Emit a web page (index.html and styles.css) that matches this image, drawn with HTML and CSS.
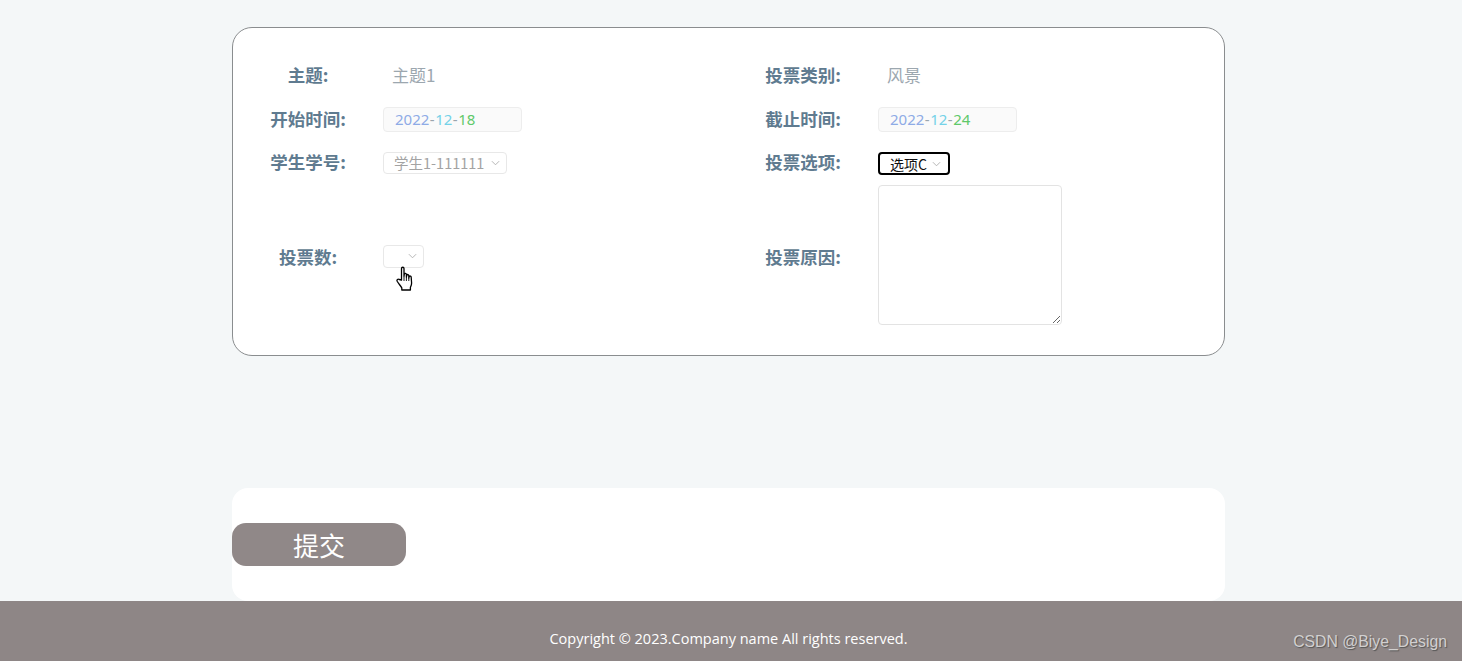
FILE: index.html
```html
<!DOCTYPE html>
<html lang="zh-CN">
<head>
<meta charset="utf-8">
<title>投票</title>
<link rel="stylesheet" href="styles.css">
</head>
<body>
<main class="page">
  <form class="card">
    <div class="field">
      <span class="label label-first">主题:</span>
      <span class="plain">主题1</span>
    </div>
    <div class="field">
      <span class="label label-first">投票类别:</span>
      <span class="plain">风景</span>
    </div>
    <div class="field">
      <span class="label">开始时间:</span>
      <div class="date"><span class="c-blue">2022</span><span class="c-dash">-</span><span class="c-cyan">12</span><span class="c-dash">-</span><span class="c-green">18</span></div>
    </div>
    <div class="field">
      <span class="label">截止时间:</span>
      <div class="date"><span class="c-blue">2022</span><span class="c-dash">-</span><span class="c-cyan">12</span><span class="c-dash">-</span><span class="c-green">24</span></div>
    </div>
    <div class="field">
      <span class="label">学生学号:</span>
      <div class="select select-student">学生1-111111<svg class="chev" viewBox="0 0 10 6"><path d="M1 1l4 4 4-4"/></svg></div>
    </div>
    <div class="field">
      <span class="label">投票选项:</span>
      <div class="select select-focus">选项C<svg class="chev" viewBox="0 0 10 6"><path d="M1 1l4 4 4-4"/></svg></div>
    </div>
    <div class="field field-low">
      <span class="label">投票数:</span>
      <div class="select select-empty"><svg class="chev" viewBox="0 0 10 6"><path d="M1 1l4 4 4-4"/></svg>
        <svg class="hand" viewBox="0 0 17 25"><path d="M5.5 14V2.6C5.500 0.800 8 0.800 8 2.600V10.500L8.300 8.200C8.600 6.900 10.300 7.100 10.400 8.500V11L10.800 9.300C11.200 8.100 12.700 8.300 12.800 9.700V12L13.200 10.600C13.700 9.600 15.200 9.900 15.200 11.200L15.600 17C15.600 19 15 20 14.400 21.400V24H5.800V21.800C4.300 19.400 2.500 17.600 1.200 15.300C.4 13.800 2 12.500 3.300 13.500Z"/><path class="hand-line" d="M8 11v4M10.400 11v4M12.800 12v3"/></svg>
      </div>
    </div>
    <div class="field">
      <span class="label label-low">投票原因:</span>
      <textarea class="reason"></textarea>
    </div>
  </form>
  <section class="actions">
    <button class="submit" type="button">提交</button>
  </section>
</main>
<footer class="footer">
  <p class="copy">Copyright © 2023.Company name All rights reserved.</p>
  <span class="mark">CSDN @Biye_Design</span>
</footer>
</body>
</html>
```

FILE: styles.css
```css
* { box-sizing: border-box; }
html, body { margin: 0; height: 100%; }
body {
  background: #f4f7f8;
  font-family: "Noto Sans CJK SC", "Liberation Sans", sans-serif;
  overflow: hidden;
}
.page { width: 1225px; padding: 27px 0 0 232px; }
.card {
  height: 329px;
  background: #fff;
  border: 1px solid #8a8d8f;
  border-radius: 20px;
  padding: 27px 0 0;
  display: grid;
  grid-template-columns: 495px 1fr;
  grid-template-rows: 43px 43px 44px 140px;
}
.field { display: flex; align-items: center; }
.label {
  width: 150px;
  flex: none;
  text-align: center;
  font-size: 17.500px;
  font-weight: 700;
  line-height: 26px;
  padding-bottom: 2px;
  color: #5f7b90;
}
.label-first { padding-bottom: 4px; }
.label-low { margin-top: 5px; }
.field-low .label { margin-top: 6px; }
.field-low .select { margin-top: 2px; }
.plain {
  padding: 0 0 5px 9px;
  font-size: 17px;
  color: #9ca7af;
}
.date {
  width: 139px;
  height: 25px;
  padding-left: 11px;
  background: #fafafa;
  border: 1px solid #ededed;
  border-radius: 4px;
  font: 15px/23px "Noto Sans", "Noto Sans CJK SC", sans-serif;
  color: #9db3e8;
}
.c-blue { color: #8eabe6; }
.c-dash { color: #9aa5ad; margin: 0 .5px; }
.c-cyan { color: #74d2e8; }
.c-green { color: #5fc96a; }
.select {
  position: relative;
  display: flex;
  align-items: center;
  height: 22px;
  padding-left: 10px;
  border: 1px solid #e8e8e8;
  border-radius: 4px;
  background: #fff;
  font-size: 14.500px;
  color: #a3a3a3;
}
.select-student { width: 124px; margin-bottom: 1px; }
.select-focus {
  width: 72px;
  height: 23px;
  border: 2px solid #000;
  padding-left: 10px;
  font-size: 14px;
  color: #111;
  margin-top: 1px;
}
.select-empty { width: 41px; height: 23px; }
.chev {
  position: absolute;
  right: 6px;
  top: 50%;
  width: 9px;
  height: 6px;
  margin-top: -3px;
  fill: none;
  stroke: #aeaeae;
  stroke-width: 1;
}
.select-focus .chev { right: 7px; }
.hand {
  position: absolute;
  left: 12px;
  top: 20px;
  width: 17px;
  height: 25px;
  fill: #fff;
  stroke: #000;
  stroke-width: 1.300;
  stroke-linejoin: round;
}
.hand-line { fill: none; stroke-width: .9; }
.reason {
  width: 184px;
  height: 140px;
  margin: 0;
  padding: 4px;
  border: 1px solid #e3e3e3;
  border-radius: 4px;
  background: #fff;
  outline: none;
}
.actions {
  height: 113px;
  margin-top: 132px;
  padding-top: 35px;
  background: #fff;
  border-radius: 16px;
}
.submit {
  display: block;
  width: 174px;
  height: 43px;
  border: 0;
  padding: 0;
  border-radius: 14px;
  background: #908888;
  color: #fff;
  font: 26px/43px "Noto Sans CJK SC", sans-serif;
}
.footer {
  position: relative;
  height: 60px;
  background: #8e8686;
  padding: 0 237px 0 232px;
}
.copy {
  margin: 0;
  text-align: center;
  font: 14.500px/76px "Open Sans", sans-serif;
  color: #fff;
}
.mark {
  position: absolute;
  right: 15px;
  top: 30px;
  font: 15.800px/22px "Liberation Sans", sans-serif;
  color: #d2d0d0;
  text-shadow: 1px 1px 1px #555;
}
```
